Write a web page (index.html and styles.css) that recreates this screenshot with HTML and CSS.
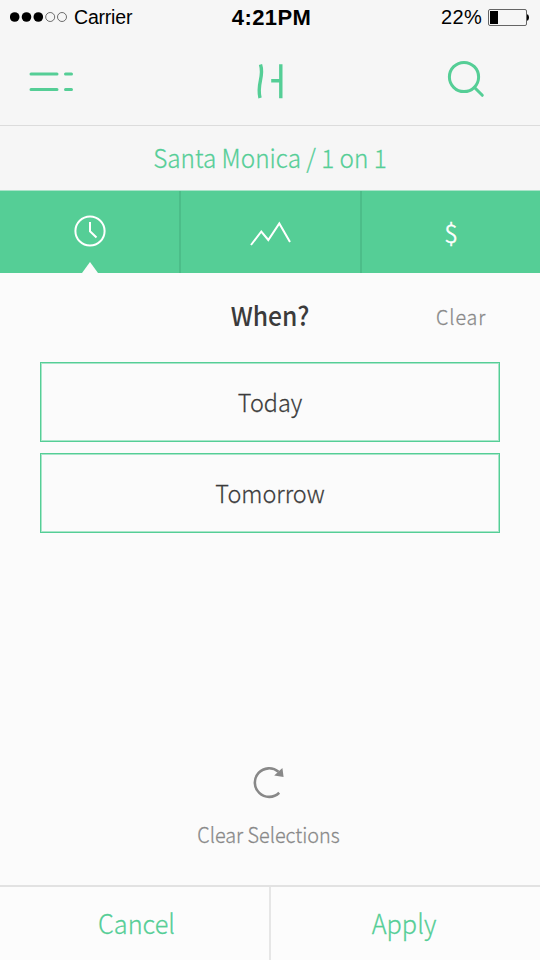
FILE: index.html
```html
<!DOCTYPE html>
<html lang="en">
<head>
<meta charset="utf-8">
<title>When?</title>
<link rel="stylesheet" href="styles.css">
</head>
<body>
<div class="screen">
  <header class="status">
    <div class="carrier">
      <svg width="60" height="12" viewBox="0 0 60 12"><g fill="#000"><circle cx="4.700" cy="6" r="4.800"/><circle cx="16.500" cy="6" r="4.800"/><circle cx="28.300" cy="6" r="4.800"/></g><g fill="none" stroke="#333" stroke-width=".7"><circle cx="40.200" cy="6" r="4.500"/><circle cx="52" cy="6" r="4.500"/></g></svg>
      <span class="carrier-name">Carrier</span>
    </div>
    <span class="time">4:21PM</span>
    <div class="battery">
      <span class="percent">22%</span>
      <svg width="43" height="18" viewBox="0 0 43 18"><rect x="1.500" y=".5" width="38" height="16" rx="1.500" fill="none" stroke="#555" stroke-width=".9"/><rect x="3" y="2" width="8" height="13"/><path d="M40 5.500h1q2 3 0 6h-1z"/></svg>
    </div>
  </header>
  <nav class="navbar">
    <svg class="menu" width="48" height="24" viewBox="0 0 48 24" stroke-width="3" stroke-linecap="round"><path d="M3 4h26M37.500 4h6M3 19.500h26M37.500 19.500h6"/></svg>
    <svg class="logo" width="30" height="38" viewBox="0 0 30 38" stroke-width="3.400"><path d="M5.500 2.500C9.500 15 1.500 21 5 36M25.800 2.300V36.200M16.200 18.700H25"/></svg>
    <svg class="search" width="40" height="40" viewBox="0 0 40 40" stroke-width="3" stroke-linecap="round"><circle cx="18" cy="18" r="14.600"/><path d="M28.500 28.500L36.300 36.300"/></svg>
  </nav>
  <div class="location"><span class="label">Santa Monica / 1 on 1</span></div>
  <div class="tabs">
    <div class="tab active">
      <svg width="34" height="34" viewBox="0 0 34 34" stroke-width="2"><circle cx="17" cy="17" r="14.600"/><path d="M17 8V17.300L23.500 23.500"/></svg>
    </div>
    <div class="tab">
      <svg width="44" height="34" viewBox="0 0 44 34" stroke-width="2"><path d="M3 31L13.300 17.500 20.300 26 31.300 9.500 42 28"/></svg>
    </div>
    <div class="tab"><span class="dollar">$</span></div>
  </div>
  <main class="content">
    <div class="heading"><h1><span class="label">When?</span></h1><span class="clear label">Clear</span></div>
    <div class="options">
      <div class="option today"><span class="label">Today</span></div>
      <div class="option tomorrow"><span class="label">Tomorrow</span></div>
    </div>
    <div class="reset">
      <svg width="36" height="36" viewBox="0 0 36 36"><path d="M28.200 28.800A14.300 14.300 0 1 1 27.500 7.800" fill="none" stroke="#888" stroke-width="2.600"/><path d="M23.200 11.500L31.400 4 32.600 13z" fill="#888"/></svg>
      <span class="reset-label label">Clear Selections</span>
    </div>
  </main>
  <footer class="actions">
    <div class="action"><span class="cancel label">Cancel</span></div>
    <div class="action"><span class="apply label">Apply</span></div>
  </footer>
</div>
</body>
</html>
```
FILE: styles.css
```css
* { box-sizing: border-box; }
body { margin: 0; font-family: "Noto Sans CJK SC", "Noto Sans", sans-serif; font-weight: 300; background: #fbfbfb; }
svg { display: block; flex: none; }
span, h1 { white-space: nowrap; }
.label { display: inline-block; transform: scaleY(1.06); }
.screen { width: 540px; height: 960px; display: flex; flex-direction: column; overflow: hidden; }
.status { height: 36px; display: grid; grid-template-columns: 1fr 1fr 1fr; background: #f6f6f6; font-family: "Liberation Sans", sans-serif; font-weight: 400; color: #000; line-height: 35px; }
.carrier, .battery { display: flex; align-items: flex-start; }
.carrier { padding-left: 10px; }
.carrier svg { margin-top: 11px; }
.battery svg { margin-top: 9px; }
.carrier-name { font-size: 19.5px; letter-spacing: -0.2px; margin-left: 4px; }
.time { font-size: 22px; font-weight: 700; text-align: center; letter-spacing: 0.4px; margin-left: 3px; }
.battery { justify-content: flex-end; padding-right: 10px; }
.percent { font-size: 20px; letter-spacing: 0.3px; margin-right: 5px; }
.navbar { height: 90px; background: #f6f6f6; border-bottom: 1px solid #dcdcdc; display: grid; grid-template-columns: 1fr 1fr 1fr; }
.navbar svg { fill: none; stroke: #55ce96; }
.menu { margin: 34px 0 0 28px; }
.logo { margin: 26px 0 0 75px; }
.search { margin: 23px 0 0 86px; }
.location { height: 65px; background: #f6f6f6; border-bottom: 1px solid #aae3c9; text-align: center; color: #55ce96; font-size: 24.3px; line-height: 61px; -webkit-text-stroke: 0.25px; }
.tabs { height: 82px; background: #55ce96; display: grid; grid-template-columns: 181px 181px 178px; grid-template-rows: 82px; }
.tab { position: relative; border-right: 2px solid #4cbd89; }
.tab:last-child { border-right: 0; }
.tab svg { fill: none; stroke: #fff; }
.tab:first-child svg { margin: 23px 0 0 73px; }
.tab:nth-child(2) svg { margin: 23px 0 0 66.5px; }
.active::after { content: ""; position: absolute; left: 82px; bottom: 0; border: 8px solid transparent; border-top: 0; border-bottom: 11px solid #fbfbfb; }
.dollar { display: block; width: 178px; text-align: center; color: #fff; font-size: 25px; line-height: 83px; -webkit-text-stroke: 0.5px; }
.content { flex: 1; display: flex; flex-direction: column; background: #fbfbfb; }
.heading { height: 89px; display: grid; grid-template-columns: 1fr 80px 1fr; color: #3b3b3b; }
h1 { grid-column: 2; margin: 0; text-align: center; font-size: 24.7px; font-weight: 500; line-height: 82px; }
.clear { margin-left: 126px; font-size: 19.7px; letter-spacing: 0.9px; line-height: 87px; color: #888; -webkit-text-stroke: 0.25px; }
.options { display: flex; flex-direction: column; gap: 10.5px; padding: 0 40px; }
.option { height: 80px; border: 1px solid #55ce96; box-shadow: inset 0 0 0 1px #aae6ca; text-align: center; font-size: 23.4px; line-height: 76px; color: #3b3b3b; -webkit-text-stroke: 0.25px; }
.reset { margin-top: auto; height: 121px; display: flex; flex-direction: column; color: #888; }
.reset svg { margin-left: 251px; }
.reset-label { width: 537px; text-align: center; font-size: 19.8px; line-height: 30px; margin-top: 20px; -webkit-text-stroke: 0.25px; }
.actions { height: 75px; background: #fcfcfc; display: grid; grid-template-columns: 271px 269px; border-top: 2px solid #e2e2e2; color: #55ce96; font-size: 25.3px; line-height: 70px; text-align: center; -webkit-text-stroke: 0.25px; }
.action:first-child { border-right: 2px solid #e6e6e6; }
.cancel { margin-left: 4px; }
.apply { margin-right: 3px; }
```
